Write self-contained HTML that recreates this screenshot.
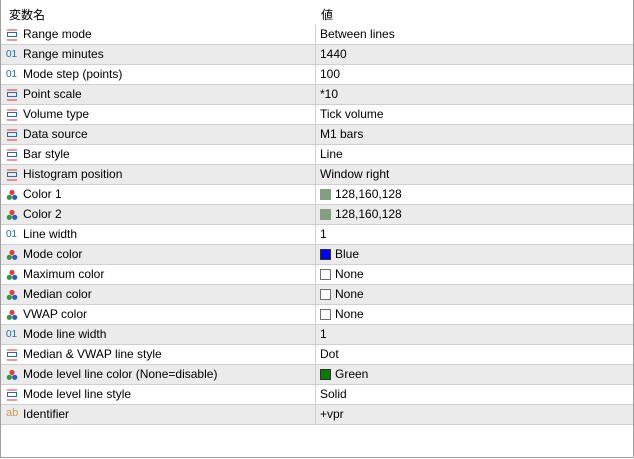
<html><head><style>
body{margin:0;width:634px;height:459px;background:#fff;font-family:"Liberation Sans","Noto Sans CJK JP",sans-serif;font-size:12px;color:#000;overflow:hidden}
.w{position:absolute;left:0;top:0;width:632px;height:457px;border:1px solid #a0a0a0;border-top:none;background:#fff}
.h{position:absolute;top:0;left:0;width:632px;height:25px}
.h span{position:absolute;top:6px}
.r{position:absolute;left:0;width:632px;height:19px;border-bottom:1px solid #d0d0d0}
.r.g{background:#ebebeb}
.r .n{position:absolute;left:22px;top:0;line-height:19px;white-space:nowrap}
.r .v{position:absolute;left:314px;top:0;height:19px;border-left:1px solid #d0d0d0;padding-left:4px;line-height:19px;white-space:nowrap}
.ic{position:absolute;left:5px;top:4px;width:12px;height:12px}
.o1{position:absolute;left:5px;top:4px;font-size:10px;color:#2a6bb0;letter-spacing:0px}
.ab{position:absolute;left:5px;top:2px;font-size:11px;color:#d4a040}
.sw{display:inline-block;width:11px;height:11px;vertical-align:-2px;margin-right:4px;border:1px solid #707070;box-sizing:border-box}
</style></head><body><div class="w">
<div class="h"><span style="left:8px">変数名</span><span style="left:320px">値</span></div>
</div>
<svg width="0" height="0" style="position:absolute"><defs>
<symbol id="en" viewBox="0 0 12 12"><rect x="1" y="0.5" width="10" height="1" fill="#e03030"/><rect x="1.5" y="3.5" width="9" height="4" fill="none" stroke="#2a6bb0" stroke-width="1"/><rect x="1" y="10.5" width="10" height="1" fill="#e03030"/></symbol>
<symbol id="co" viewBox="0 0 12 12"><circle cx="6" cy="3.5" r="2.6" fill="#e04040"/><circle cx="3.3" cy="8.3" r="2.6" fill="#2f9a3a"/><circle cx="8.7" cy="8.3" r="2.6" fill="#2a5cc8"/></symbol>
</defs></svg>
<div style="position:absolute;left:1px;top:0">
<div class="r" style="top:25px"><svg class="ic"><use href="#en"/></svg><span class="n">Range mode</span><span class="v">Between lines</span></div>
<div class="r g" style="top:45px"><span class="o1">01</span><span class="n">Range minutes</span><span class="v">1440</span></div>
<div class="r" style="top:65px"><span class="o1">01</span><span class="n">Mode step (points)</span><span class="v">100</span></div>
<div class="r g" style="top:85px"><svg class="ic"><use href="#en"/></svg><span class="n">Point scale</span><span class="v">*10</span></div>
<div class="r" style="top:105px"><svg class="ic"><use href="#en"/></svg><span class="n">Volume type</span><span class="v">Tick volume</span></div>
<div class="r g" style="top:125px"><svg class="ic"><use href="#en"/></svg><span class="n">Data source</span><span class="v">M1 bars</span></div>
<div class="r" style="top:145px"><svg class="ic"><use href="#en"/></svg><span class="n">Bar style</span><span class="v">Line</span></div>
<div class="r g" style="top:165px"><svg class="ic"><use href="#en"/></svg><span class="n">Histogram position</span><span class="v">Window right</span></div>
<div class="r" style="top:185px"><svg class="ic"><use href="#co"/></svg><span class="n">Color 1</span><span class="v"><i class="sw" style="background:#80a080;border-color:#8a9a8a"></i>128,160,128</span></div>
<div class="r g" style="top:205px"><svg class="ic"><use href="#co"/></svg><span class="n">Color 2</span><span class="v"><i class="sw" style="background:#80a080;border-color:#8a9a8a"></i>128,160,128</span></div>
<div class="r" style="top:225px"><span class="o1">01</span><span class="n">Line width</span><span class="v">1</span></div>
<div class="r g" style="top:245px"><svg class="ic"><use href="#co"/></svg><span class="n">Mode color</span><span class="v"><i class="sw" style="background:#0000ff;border-color:#303030"></i>Blue</span></div>
<div class="r" style="top:265px"><svg class="ic"><use href="#co"/></svg><span class="n">Maximum color</span><span class="v"><i class="sw" style="background:#fff"></i>None</span></div>
<div class="r g" style="top:285px"><svg class="ic"><use href="#co"/></svg><span class="n">Median color</span><span class="v"><i class="sw" style="background:#fff"></i>None</span></div>
<div class="r" style="top:305px"><svg class="ic"><use href="#co"/></svg><span class="n">VWAP color</span><span class="v"><i class="sw" style="background:#fff"></i>None</span></div>
<div class="r g" style="top:325px"><span class="o1">01</span><span class="n">Mode line width</span><span class="v">1</span></div>
<div class="r" style="top:345px"><svg class="ic"><use href="#en"/></svg><span class="n">Median &amp; VWAP line style</span><span class="v">Dot</span></div>
<div class="r g" style="top:365px"><svg class="ic"><use href="#co"/></svg><span class="n">Mode level line color (None=disable)</span><span class="v"><i class="sw" style="background:#008000;border-color:#303030"></i>Green</span></div>
<div class="r" style="top:385px"><svg class="ic"><use href="#en"/></svg><span class="n">Mode level line style</span><span class="v">Solid</span></div>
<div class="r g" style="top:405px"><span class="ab">ab</span><span class="n">Identifier</span><span class="v">+vpr</span></div>
</div>
</body></html>
